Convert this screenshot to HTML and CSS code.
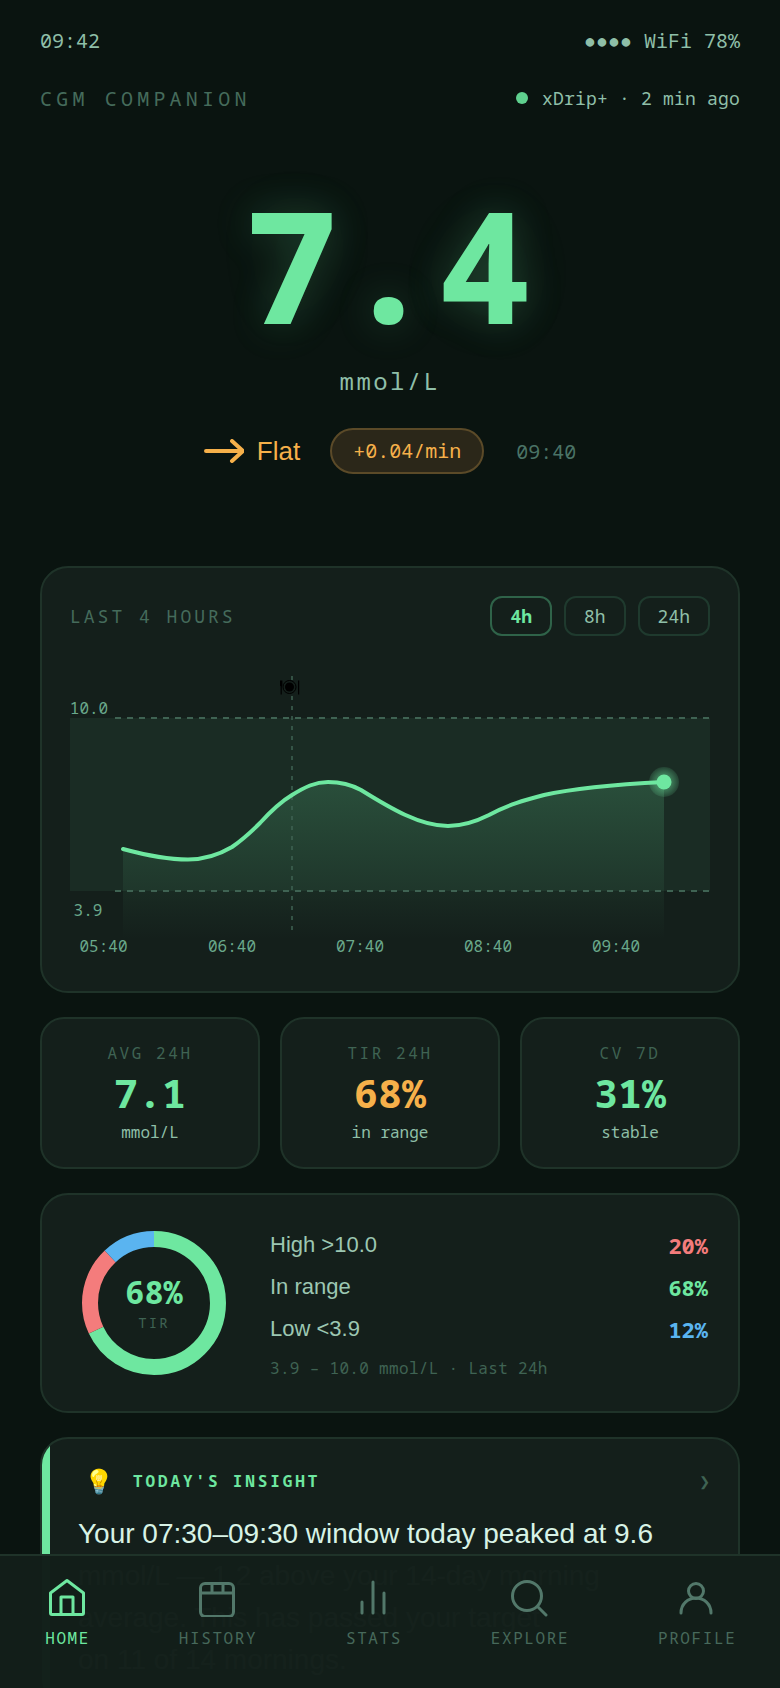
FILE: index.html
```html
<!DOCTYPE html>
<html lang="en">
<head>
<meta charset="utf-8">
<title>CGM Companion</title>
<link rel="stylesheet" href="styles.css">
</head>
<body>
<div class="app">
  <main class="content">
    <div class="status"><span>09:42</span><span>●●●● WiFi 78%</span></div>
    <header class="top">
      <span class="brand">CGM COMPANION</span>
      <span class="source"><i class="live"></i>xDrip+ · 2 min ago</span>
    </header>
    <section class="reading">
      <div class="value">7.4</div>
      <div class="unit">mmol/L</div>
      <div class="trend">
        <svg class="arrow" viewBox="0 0 40 24" width="40" height="24"><path d="M2 12H38M28 2L39 12L28 22"/></svg>
        <span class="flat">Flat</span>
        <span class="pill">+0.04/min</span>
        <span class="stamp">09:40</span>
      </div>
    </section>
    <section class="card chart">
      <div class="chart-head">
        <span class="chart-title">LAST 4 HOURS</span>
        <div class="ranges">
          <button class="range on">4h</button>
          <button class="range">8h</button>
          <button class="range">24h</button>
        </div>
      </div>
      <svg class="plot" viewBox="0 0 640 292" width="640" height="292">
        <defs>
          <linearGradient id="fade" gradientUnits="userSpaceOnUse" x1="0" y1="100" x2="0" y2="272">
            <stop offset="0" stop-color="#6ee7a0" stop-opacity=".2"/>
            <stop offset="1" stop-color="#6ee7a0" stop-opacity="0"/>
          </linearGradient>
          <radialGradient id="glow">
            <stop offset=".45" stop-color="#6ee7a0" stop-opacity=".45"/>
            <stop offset="1" stop-color="#6ee7a0" stop-opacity=".12"/>
          </radialGradient>
        </defs>
        <rect class="band" x="0" y="50" width="640" height="173"/>
        <path class="area" d="M53 181C75 187 96 191.500 118 191.500C130 191.500 145 189 162 179C172 172 180 165 190 155C200 144 212 133 222 127C235 119 245 114 258 114C270 114 280 116 291 122C320 140 350 158 378 158C392 158 405 154 419 147C437 137 455 132 474 127C510 119 555 116 594 114V272H53Z"/>
        <line class="rule" x1="45" y1="50" x2="640" y2="50"/>
        <line class="rule" x1="45" y1="223" x2="640" y2="223"/>
        <line class="meal" x1="222" y1="8" x2="222" y2="268"/>
        <path class="curve" d="M53 181C75 187 96 191.500 118 191.500C130 191.500 145 189 162 179C172 172 180 165 190 155C200 144 212 133 222 127C235 119 245 114 258 114C270 114 280 116 291 122C320 140 350 158 378 158C392 158 405 154 419 147C437 137 455 132 474 127C510 119 555 116 594 114"/>
        <circle class="halo" cx="594" cy="114" r="15"/>
        <circle class="dot" cx="594" cy="114" r="7.500"/>
        <text class="axis" x="19" y="46" text-anchor="middle">10.0</text>
        <text class="axis" x="18" y="248" text-anchor="middle">3.9</text>
        <text class="axis" x="33.500" y="284" text-anchor="middle">05:40</text>
        <text class="axis" x="162" y="284" text-anchor="middle">06:40</text>
        <text class="axis" x="290" y="284" text-anchor="middle">07:40</text>
        <text class="axis" x="418" y="284" text-anchor="middle">08:40</text>
        <text class="axis" x="546" y="284" text-anchor="middle">09:40</text>
        <g class="meal-icon">
          <circle class="plate" cx="219.500" cy="19" r="6.500"/>
          <circle cx="219.500" cy="19" r="4.500"/>
          <path d="M210 12.500H212.400V17.500L211.800 18.500V26.500H210.600V18.500L210 17.500Z"/>
          <rect x="228" y="12.500" width="1.200" height="14"/>
        </g>
      </svg>
    </section>
    <section class="stats">
      <div class="card stat"><span class="stat-label">AVG 24H</span><span class="stat-value green">7.1</span><span class="stat-sub">mmol/L</span></div>
      <div class="card stat"><span class="stat-label">TIR 24H</span><span class="stat-value amber">68%</span><span class="stat-sub">in range</span></div>
      <div class="card stat"><span class="stat-label">CV 7D</span><span class="stat-value green">31%</span><span class="stat-sub">stable</span></div>
    </section>
    <section class="card tir">
      <div class="donut">
        <svg viewBox="0 0 144 144" width="144" height="144">
          <g class="ring">
            <circle class="seg-green" cx="72" cy="72" r="64" pathLength="100" stroke-dasharray="68 32" stroke-dashoffset="0"/>
            <circle class="seg-red" cx="72" cy="72" r="64" pathLength="100" stroke-dasharray="20 80" stroke-dashoffset="-68"/>
            <circle class="seg-blue" cx="72" cy="72" r="64" pathLength="100" stroke-dasharray="12 88" stroke-dashoffset="-88"/>
          </g>
        </svg>
        <div class="donut-center"><span class="donut-value">68%</span><span class="donut-label">TIR</span></div>
      </div>
      <div class="legend">
        <div class="legend-row"><span>High &gt;10.0</span><b class="red">20%</b></div>
        <div class="legend-row"><span>In range</span><b class="green">68%</b></div>
        <div class="legend-row"><span>Low &lt;3.9</span><b class="blue">12%</b></div>
        <div class="legend-note">3.9 – 10.0 mmol/L · Last 24h</div>
      </div>
    </section>
    <section class="card insight">
      <div class="insight-head">
        <span class="bulb">💡</span>
        <span class="insight-title">TODAY'S INSIGHT</span>
        <span class="chev">❯</span>
      </div>
      <p class="insight-text">Your 07:30–09:30 window today peaked at 9.6 mmol/L — 1.2 above your 14-day morning<br>average. This has passed your target<br>on 11 of 14 mornings.</p>
    </section>
  </main>
  <nav class="nav">
    <div class="tab on">
      <svg viewBox="0 0 40 40" width="40" height="40"><path d="M3.500 16L20 3.500L36.500 16V36Q36.500 37.500 35 37.500H5Q3.500 37.500 3.500 36Z"/><path d="M14 37.500V20H26V37.500"/></svg>
      <span>HOME</span>
    </div>
    <div class="tab">
      <svg viewBox="0 0 40 40" width="40" height="40"><rect x="3.500" y="6.500" width="33" height="33" rx="4.500"/><path d="M3.500 16H36.500M15 6.500V16M26 6.500V16"/></svg>
      <span>HISTORY</span>
    </div>
    <div class="tab">
      <svg viewBox="0 0 40 40" width="40" height="40"><path d="M9 25V36M20 5V36M31 16V36"/></svg>
      <span>STATS</span>
    </div>
    <div class="tab">
      <svg viewBox="0 0 40 40" width="40" height="40"><circle cx="18" cy="19" r="14.500"/><path d="M29 30L37 38"/></svg>
      <span>EXPLORE</span>
    </div>
    <div class="tab">
      <svg viewBox="0 0 40 40" width="40" height="40"><circle cx="20" cy="14" r="7.500"/><path d="M5 36C5 27 12 21 20 21S35 27 35 36"/></svg>
      <span>PROFILE</span>
    </div>
  </nav>
</div>
</body>
</html>
```
FILE: styles.css
```css
* { box-sizing: border-box; }
html, body { margin: 0; height: 100%; }
body {
  background: #0a1410;
  color: #8fbfa8;
  font-family: "Noto Sans Mono", monospace;
}
.app {
  position: relative;
  width: 780px;
  height: 1688px;
  overflow: hidden;
}
.content { padding: 31px 40px 0; }
.status {
  display: flex;
  justify-content: space-between;
  align-items: center;
  height: 20px;
  font-size: 20px;
  line-height: 20px;
  color: #8fbfa8;
}
.top {
  display: flex;
  justify-content: space-between;
  align-items: center;
  height: 24px;
  margin-top: 35px;
}
.brand { font-size: 20px; letter-spacing: 4.2px; color: #456b5b; }
.source { display: flex; align-items: center; font-size: 18px; letter-spacing: .2px; color: #8fbfa8; }
.live { width: 12px; height: 12px; margin-right: 14px; border-radius: 50%; background: #5fd08e; }
.reading { display: flex; flex-direction: column; align-items: center; }
.value {
  margin-top: 70px;
  font-size: 156px;
  line-height: 168px;
  letter-spacing: .02em;
  font-weight: 800;
  color: #6ee7a0;
  text-shadow: 0 0 40px rgba(110, 231, 160, .22), 0 0 80px rgba(110, 231, 160, .05);
}
.unit { margin-top: 19px; font-size: 24px; line-height: 28px; letter-spacing: .1em; color: #8fbfa8; }
.trend { display: flex; align-items: center; height: 46px; margin-top: 33px; }
.arrow { fill: none; stroke: #f6b04a; stroke-width: 4; stroke-linecap: round; stroke-linejoin: round; }
.flat { margin-left: 13px; font-family: "Liberation Sans", sans-serif; font-size: 26px; color: #f6b04a; }
.pill {
  margin-left: 30px;
  padding: 0 21px;
  height: 46px;
  line-height: 42px;
  border: 2px solid #5b4a28;
  border-radius: 23px;
  background: #2b2719;
  font-size: 20px;
  color: #f6b04a;
}
.stamp { margin-left: 32px; font-size: 20px; color: #4a7366; }
.card {
  background: #141f1b;
  border: 2px solid #1f3329;
  border-radius: 28px;
}
.chart { height: 427px; margin-top: 92px; padding: 28px; }
.chart-head { display: flex; justify-content: space-between; align-items: center; }
.chart-title { font-size: 18px; letter-spacing: 3px; color: #456b5b; }
.ranges { display: flex; gap: 12px; }
.range {
  height: 40px;
  padding: 0 18px;
  background: transparent;
  border: 2px solid #1f3a2e;
  border-radius: 12px;
  font: 18px "Noto Sans Mono", monospace;
  color: #8fbfa8;
}
.range.on { border-color: #2f6349; color: #6ee7a0; font-weight: 700; }
.plot { display: block; margin-top: 32px; overflow: visible; }
.band { fill: #6ee7a0; fill-opacity: .07; }
.area { fill: url(#fade); }
.rule { stroke: #3f6353; stroke-width: 2; stroke-dasharray: 6 6; }
.meal { stroke: #3f6353; stroke-width: 1.500; stroke-dasharray: 4 6; }
.curve { fill: none; stroke: #6ee7a0; stroke-width: 4; stroke-linecap: round; }
.halo { fill: url(#glow); }
.dot { fill: #6ee7a0; }
.axis { font: 16px "Noto Sans Mono", monospace; fill: #6aa98b; }
.meal-icon { fill: #000; }
.plate { fill: none; stroke: #000; stroke-width: 1; }
.stats { display: grid; grid-template-columns: repeat(3, 1fr); gap: 20px; margin-top: 24px; }
.stat {
  display: flex;
  flex-direction: column;
  align-items: center;
  height: 152px;
  padding-top: 24px;
  border-radius: 24px;
}
.stat-label { font-size: 16px; line-height: 20px; letter-spacing: .16em; color: #3f6353; }
.stat-value { margin-top: 8px; font-size: 40px; line-height: 44px; font-weight: 700; }
.stat-sub { margin-top: 7px; font-size: 16px; line-height: 20px; color: #8fbfa8; }
.green { color: #6ee7a0; }
.amber { color: #f6b04a; }
.red { color: #f47c7c; }
.blue { color: #5ab4f0; }
.tir {
  display: flex;
  align-items: center;
  gap: 44px;
  height: 220px;
  margin-top: 24px;
  padding: 0 30px 0 40px;
}
.donut { position: relative; width: 144px; height: 144px; flex: none; }
.donut svg { display: block; }
.ring { transform: rotate(-90deg); transform-origin: 72px 72px; fill: none; stroke-width: 16; }
.seg-green { stroke: #6ee7a0; }
.seg-red { stroke: #f47c7c; }
.seg-blue { stroke: #5ab4f0; }
.donut-center {
  position: absolute;
  inset: 0;
  display: flex;
  flex-direction: column;
  align-items: center;
  justify-content: center;
}
.donut-value { font-size: 32px; line-height: 36px; font-weight: 700; color: #6ee7a0; }
.donut-label { margin-top: 4px; font-size: 14px; line-height: 18px; letter-spacing: .15em; color: #3f6353; }
.legend { flex: 1; display: flex; flex-direction: column; margin-top: -4px; }
.legend-row {
  display: flex;
  justify-content: space-between;
  align-items: center;
  height: 42px;
  font-family: "Liberation Sans", sans-serif;
  font-size: 22px;
  color: #9cc7b2;
}
.legend-row b { font-family: "Noto Sans Mono", monospace; font-size: 22px; }
.legend-note { margin-top: 8px; font-size: 16px; line-height: 20px; letter-spacing: .02em; color: #3f6353; }
.insight { position: relative; margin-top: 24px; padding: 24px 36px; overflow: hidden; }
.insight::before {
  content: "";
  position: absolute;
  left: 0;
  top: 0;
  bottom: 0;
  width: 8px;
  background: #6ee7a0;
}
.insight-head { display: flex; align-items: center; height: 36px; padding-left: 6px; }
.bulb { width: 28px; font-size: 24px; line-height: 36px; }
.insight-title { margin-left: 21px; font-size: 16px; font-weight: 700; letter-spacing: .18em; color: #6ee7a0; }
.chev { margin-left: auto; font-size: 18px; color: #3f6353; margin-right: -8px; }
.insight-text {
  margin: 14px 0 0;
  font-family: "Liberation Sans", sans-serif;
  font-size: 28px;
  line-height: 42px;
  color: #d8f3e6;
}
.nav {
  position: absolute;
  left: 0;
  right: 0;
  bottom: 0;
  height: 134px;
  display: flex;
  justify-content: space-around;
  background: rgba(18, 30, 25, .99);
  border-top: 2px solid #1f3329;
  padding-top: 21px;
}
.tab {
  display: flex;
  flex-direction: column;
  align-items: center;
  font-size: 16px;
  line-height: 20px;
  letter-spacing: .1em;
  color: #47695b;
}
.tab span { margin-top: 11px; margin-right: -.1em; }
.tab svg { fill: none; stroke: #52786a; stroke-width: 3; stroke-linecap: round; stroke-linejoin: round; }
.tab.on { color: #6ee7a0; }
.tab.on svg { stroke: #6ee7a0; }
```
